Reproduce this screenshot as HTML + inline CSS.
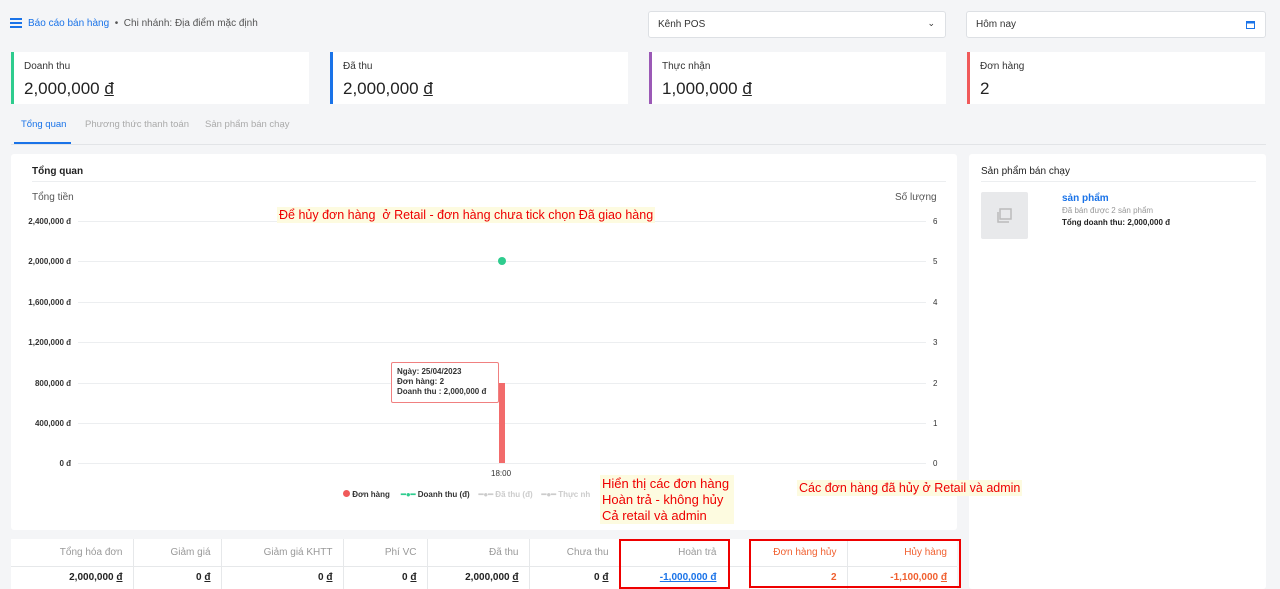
<!DOCTYPE html>
<html><head><meta charset="utf-8"><style>
*{box-sizing:border-box;margin:0;padding:0}
body{width:1280px;height:589px;overflow:hidden;background:#f4f5f7;font-family:"Liberation Sans",Arial,sans-serif;position:relative;color:#222}
.a{position:absolute}
.card{background:#fff;border-radius:3px}
.kpi{top:52px;height:52px;background:#fff;border-left:3px solid}
.kpi .l{position:absolute;left:10px;top:9px;font-size:10px;color:#333}
.kpi .v{position:absolute;left:10px;top:27px;font-size:17px;color:#222}
.sel{top:11px;height:27px;background:#fff;border:1px solid #dde0e4;border-radius:3px;font-size:10px;padding:7px 9px;color:#333}
.yl{position:absolute;left:20px;width:51px;text-align:right;font-size:8px;color:#333;font-weight:bold}
.yr{position:absolute;left:933px;font-size:8px;color:#333}
.gl{position:absolute;left:78px;width:848px;height:1px;background:#eceef0}
.note{position:absolute;background:#fdfbe0;color:#e00;font-size:13px;white-space:nowrap}
table{border-collapse:collapse;font-size:10px}
td{border-right:1px solid #e6e8ea;text-align:right;padding-right:10px;white-space:nowrap}
tr.h td{height:27px;color:#999;border-bottom:1px solid #e6e8ea}
tr.b td{height:23px;font-weight:bold;color:#222}
</style></head><body>
<div class="a" style="left:10px;top:18px;width:12px;height:10px">
<div style="height:2px;background:#1a73e8;margin-bottom:2px"></div><div style="height:2px;background:#1a73e8;margin-bottom:2px"></div><div style="height:2px;background:#1a73e8"></div></div>
<div class="a" style="left:28px;top:18px;font-size:10px;color:#1a73e8">Báo cáo bán hàng <span style="color:#555">&nbsp;•&nbsp; Chi nhánh: Địa điểm mặc định</span></div>
<div class="a sel" style="left:648px;width:298px">Kênh POS<span style="position:absolute;right:10px;top:6px;font-size:9px">⌄</span></div>
<div class="a sel" style="left:966px;width:300px">Hôm nay<svg style="position:absolute;right:10px;top:8px" width="9" height="9" viewBox="0 0 9 9"><rect x="0.5" y="1.5" width="8" height="7" fill="none" stroke="#1a73e8"/><rect x="0.5" y="1.5" width="8" height="2" fill="#1a73e8"/></svg></div>

<div class="a kpi" style="left:11px;width:298px;border-color:#2ecc8e"><div class="l">Doanh thu</div><div class="v">2,000,000 <u>đ</u></div></div>
<div class="a kpi" style="left:330px;width:298px;border-color:#1a73e8"><div class="l">Đã thu</div><div class="v">2,000,000 <u>đ</u></div></div>
<div class="a kpi" style="left:649px;width:297px;border-color:#9b59b6"><div class="l">Thực nhận</div><div class="v">1,000,000 <u>đ</u></div></div>
<div class="a kpi" style="left:967px;width:298px;border-color:#f05a5a"><div class="l">Đơn hàng</div><div class="v">2</div></div>

<div class="a" style="left:21px;top:119px;font-size:9.5px;color:#1a73e8">Tổng quan</div>
<div class="a" style="left:85px;top:119px;font-size:9.5px;color:#aaa">Phương thức thanh toán</div>
<div class="a" style="left:205px;top:119px;font-size:9.5px;color:#aaa">Sản phẩm bán chạy</div>
<div class="a" style="left:11px;top:144px;width:1255px;height:1px;background:#e2e4e7"></div>
<div class="a" style="left:14px;top:142px;width:57px;height:2px;background:#1a73e8"></div>

<div class="a card" style="left:11px;top:154px;width:946px;height:376px"></div>
<div class="a" style="left:32px;top:166px;font-size:10px;font-weight:bold">Tổng quan</div>
<div class="a" style="left:32px;top:181px;width:914px;height:1px;background:#eceef0"></div>
<div class="a" style="left:32px;top:192px;font-size:10px;color:#555">Tổng tiền</div>
<div class="a" style="left:895px;top:192px;font-size:10px;color:#555">Số lượng</div>
<div class="gl" style="top:221px"></div><div class="gl" style="top:261px"></div><div class="gl" style="top:302px"></div><div class="gl" style="top:342px"></div><div class="gl" style="top:383px"></div><div class="gl" style="top:423px"></div><div class="gl" style="top:463px"></div>
<div class="yl" style="top:217px">2,400,000 đ</div><div class="yl" style="top:257px">2,000,000 đ</div><div class="yl" style="top:298px">1,600,000 đ</div><div class="yl" style="top:338px">1,200,000 đ</div><div class="yl" style="top:379px">800,000 đ</div><div class="yl" style="top:419px">400,000 đ</div><div class="yl" style="top:459px">0 đ</div>
<div class="yr" style="top:217px">6</div><div class="yr" style="top:257px">5</div><div class="yr" style="top:298px">4</div><div class="yr" style="top:338px">3</div><div class="yr" style="top:379px">2</div><div class="yr" style="top:419px">1</div><div class="yr" style="top:459px">0</div>
<div class="a" style="left:499px;top:383px;width:6px;height:80px;background:#f26b6b"></div>
<div class="a" style="left:498px;top:257px;width:8px;height:8px;border-radius:50%;background:#2ecc8e"></div>
<div class="a" style="left:391px;top:362px;width:108px;height:41px;background:#fff;border:1px solid #f08080;border-radius:2px;font-size:8px;font-weight:bold;color:#333;padding:4px 5px;line-height:10px">Ngày: 25/04/2023<br>Đơn hàng: 2<br>Doanh thu : 2,000,000 đ</div>
<div class="a" style="left:491px;top:469px;font-size:8px;color:#333">18:00</div>
<div class="a" style="left:343px;top:490px;font-size:8px;font-weight:bold;color:#333;white-space:nowrap">
<span style="display:inline-block;width:7px;height:7px;border-radius:50%;background:#f05a5a"></span> Đơn hàng &nbsp;&nbsp;&nbsp; <span style="color:#2ecc8e">━●━</span> Doanh thu (đ) &nbsp;&nbsp; <span style="color:#ccc">━●━ Đã thu (đ) &nbsp;&nbsp; ━●━ Thực nh</span></div>
<div class="note" style="left:277px;top:207px;padding:1px 2px;font-size:12.5px">Để hủy đơn hàng &nbsp;ở Retail - đơn hàng chưa tick chọn Đã giao hàng</div>
<div class="note" style="left:600px;top:475px;width:134px;height:49px;padding:1px 2px;line-height:16px">Hiển thị các đơn hàng<br>Hoàn trả - không hủy<br>Cả retail và admin</div>

<div class="a card" style="left:969px;top:154px;width:297px;height:435px"></div>
<div class="a" style="left:981px;top:166px;font-size:10px;color:#222">Sản phẩm bán chạy</div>
<div class="a" style="left:981px;top:181px;width:275px;height:1px;background:#eceef0"></div>
<div class="a" style="left:981px;top:192px;width:47px;height:47px;background:#e8e9eb;border-radius:2px"><svg style="margin:15px" width="17" height="17" viewBox="0 0 17 17"><rect x="4" y="2" width="11" height="10" fill="none" stroke="#bbb" stroke-width="1.5"/><path d="M2 5v10h11" fill="none" stroke="#bbb" stroke-width="1.5"/></svg></div>
<div class="a" style="left:1062px;top:193px;font-size:10px;font-weight:bold;color:#1a73e8">sản phẩm</div>
<div class="a" style="left:1062px;top:206px;font-size:8px;color:#999">Đã bán được 2 sản phẩm</div>
<div class="a" style="left:1062px;top:218px;font-size:8px;font-weight:bold;color:#222">Tổng doanh thu: 2,000,000 đ</div>

<div class="note" style="left:797px;top:480px;padding:1px 2px;font-size:12.5px">Các đơn hàng đã hủy ở Retail và admin</div>

<div class="a" style="left:11px;top:539px;width:946px;height:50px;background:#fff">
<table style="width:946px;table-layout:fixed"><tr class="h"><td style="width:122px">Tổng hóa đơn</td><td style="width:88px">Giảm giá</td><td style="width:122px">Giảm giá KHTT</td><td style="width:84px">Phí VC</td><td style="width:102px">Đã thu</td><td style="width:90px">Chưa thu</td><td style="width:130px;padding-right:32px">Hoàn trả</td><td style="width:98px;color:#f06030">Đơn hàng hủy</td><td style="width:110px;color:#f06030;border-right:0">Hủy hàng</td></tr>
<tr class="b"><td>2,000,000 <u>đ</u></td><td>0 <u>đ</u></td><td>0 <u>đ</u></td><td>0 <u>đ</u></td><td>2,000,000 <u>đ</u></td><td>0 <u>đ</u></td><td style="color:#1a73e8;text-decoration:underline;padding-right:32px">-1,000,000 đ</td><td style="color:#f06030">2</td><td style="color:#f06030;border-right:0">-1,100,000 <u>đ</u></td></tr></table></div>
<div class="a" style="left:619px;top:539px;width:111px;height:50px;border:2px solid #e00"></div>
<div class="a" style="left:749px;top:539px;width:212px;height:49px;border:2px solid #e00"></div>
</body></html>
